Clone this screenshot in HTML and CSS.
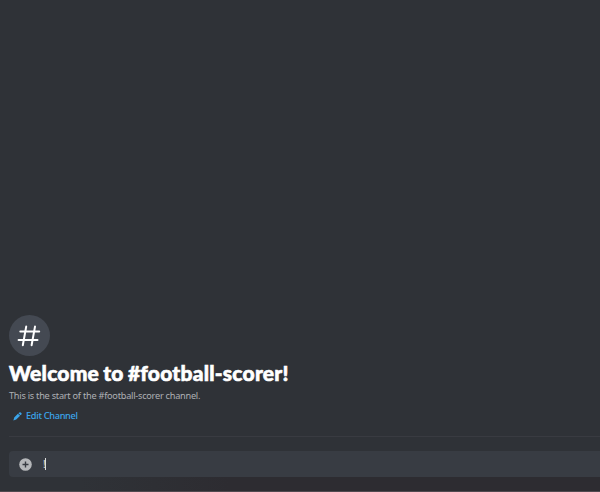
FILE: index.html
```html
<!DOCTYPE html>
<html lang="en">
<head>
<meta charset="utf-8">
<title>#football-scorer</title>
<link rel="stylesheet" href="styles.css">
</head>
<body>
<main class="chat">
  <section class="welcome">
    <div class="channel-icon">
      <svg width="41" height="41" viewBox="0 0 41 41" fill="none" stroke="#fff" stroke-width="2" stroke-linecap="round"><path d="M17.2 11.6 13.8 30.2M26 11.6 22.6 30.2M11.3 16.4H30.2M9.6 25.1H28.5"/></svg>
    </div>
    <h1 class="title"><span>Welcome to #football-scorer!</span></h1>
    <p class="description">This is the start of the #football-scorer channel.</p>
    <a class="edit">
      <svg width="9" height="9" viewBox="0 0 9 9" fill="#3ba5ea"><path d="M6 .7Q6.9-.2 7.7.5L8.3 1.1Q9 1.9 8.2 2.7L7.6 3.3 5.4 1.2ZM4.9 1.7 7.1 3.8 3.2 7.6.4 8.6 1.2 5.4Z"/></svg>
      <span>Edit Channel</span>
    </a>
  </section>
  <div class="composer">
    <svg width="13" height="13" viewBox="0 0 13 13"><circle cx="6.5" cy="6.5" r="6.3" fill="#b5b7ba"/><path d="M6.5 3.5v6M3.5 6.5h6" stroke="#373b42" stroke-width="1.4"/></svg>
    <div class="input"><span>!</span><i class="caret"></i></div>
  </div>
</main>
</body>
</html>
```
FILE: styles.css
```css
* { box-sizing: border-box; }
body { margin: 0; background: #2f3136; font-family: "Noto Sans", sans-serif; overflow: hidden; }
.chat {
  height: 492px;
  display: flex;
  flex-direction: column;
  justify-content: flex-end;
  padding: 0 0 14px 9px;
  background: linear-gradient(90deg, transparent 80px, #2d2c31 230px) bottom / 100% 15px no-repeat, #2f3237;
  border-bottom: 1px solid #514a50;
}
.welcome { border-bottom: 1px solid #393b41; padding-bottom: 12px; margin-bottom: 14px; }
.channel-icon { width: 41px; height: 41px; border-radius: 50%; background: #444952; }
.channel-icon svg { display: block; }
.title { margin: 4px 0 0; font-family: Lato, sans-serif; font-size: 21px; line-height: 26px; font-weight: 900; color: #fff; white-space: nowrap; letter-spacing: .22px; word-spacing: -1px; -webkit-text-stroke: .6px #fff; }
.description { margin: 2px 0 0; font-size: 9.2px; line-height: 16px; color: #aeb0b4; letter-spacing: -.25px; white-space: nowrap; }
.edit { display: flex; align-items: center; gap: 4px; height: 16px; margin-top: 4px; padding-left: 4px; font-size: 9.2px; font-weight: 500; letter-spacing: -.3px; line-height: 16px; color: #3ba5ea; }
.composer { height: 26px; display: flex; align-items: center; gap: 11px; padding-left: 10px; background: #383c43; border-radius: 4px 0 0 4px; }
.input { display: flex; align-items: center; font-size: 10px; color: #dcddde; }
.input span { width: 2px; }
.caret { width: 1px; height: 12px; background: #dcddde; }
```
